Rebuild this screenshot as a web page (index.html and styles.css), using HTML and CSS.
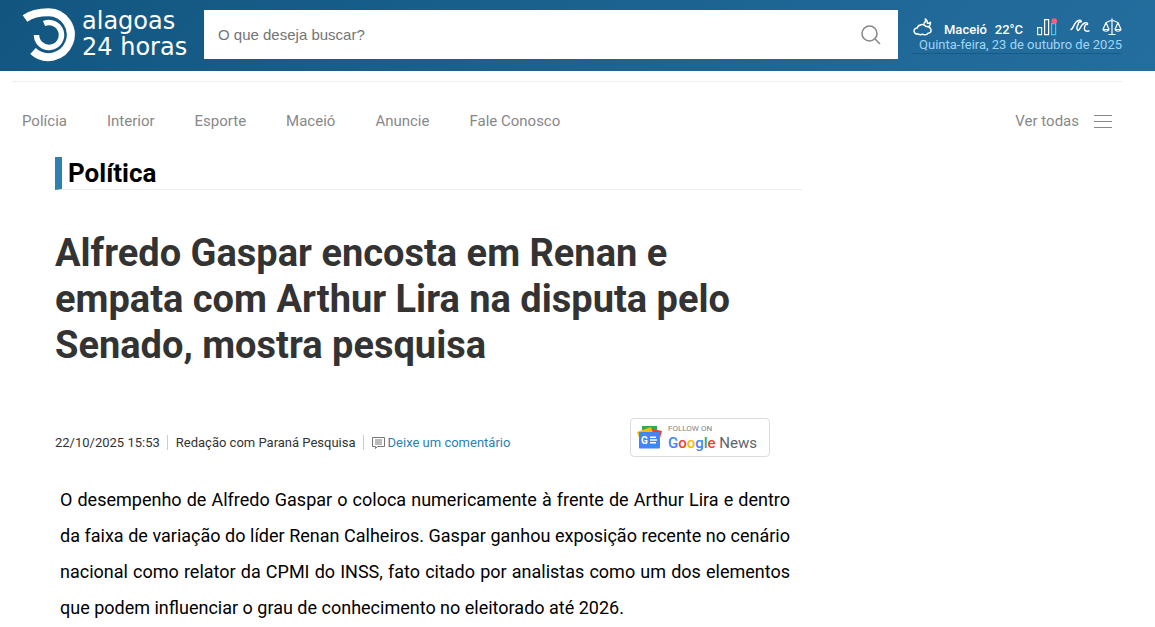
FILE: index.html
```html
<!DOCTYPE html>
<html lang="pt-BR">
<head>
<meta charset="utf-8">
<meta name="viewport" content="width=device-width, initial-scale=1">
<title>Alfredo Gaspar encosta em Renan - Alagoas 24 Horas</title>
<link rel="stylesheet" href="styles.css">
</head>
<body>
<header class="topbar">
  <a class="brand" href="#">
    <svg class="brand-mark" viewBox="0 0 54 54" aria-hidden="true">
      <g fill="none" stroke="#fff">
        <path d="M3 10.500C10 5.500 18 4.300 26.700 4.300A22.400 22.400 0 1 1 11 43" stroke-width="8"/>
        <path d="M22 15.500A12.500 12.500 0 1 1 14.500 27" stroke-width="5.500"/>
      </g>
    </svg>
    <span class="brand-name"><span>alagoas</span><span>24 horas</span></span>
  </a>
  <form class="search">
    <input class="search-input" type="text" placeholder="O que deseja buscar?" aria-label="O que deseja buscar?">
    <button class="search-button" type="button" aria-label="Buscar">
      <svg viewBox="0 0 20 20" width="20" height="20" fill="none" stroke="#888" stroke-width="1.600"><circle cx="8.500" cy="8.500" r="7.500"/><path d="M13.800 13.800 19 19"/></svg>
    </button>
  </form>
  <div class="info">
    <div class="weather">
      <svg class="cloud" viewBox="0 0 20 18" width="20" height="18" fill="none" stroke="#fff" stroke-width="1.500" stroke-linejoin="round"><path d="M5 16C0 16-.2 10.200 4.200 10 5 6.300 10.800 5.300 13 8.600c5.500-.8 7 6.600 2 6.600-1.500 2-4 2-5.500 1-1.500.8-3 .6-4.500-.2Z"/><path d="M10.500 5.500C12.500 4.500 13 3 12.300 1c1.800 1 2.200 2.800 2.200 4.200 1.200.3 2.200 0 3-.8 0 2-.5 3.200-1.500 4"/></svg>
      <span class="city">Maceió</span>
      <span class="temp">22°C</span>
      <a href="#" class="chart-link" aria-label="Indicadores"><svg viewBox="0 0 20 18" width="20" height="18" fill="none" stroke-width="1.200"><path d="M.6 9.600h4v7h-4z" stroke="#f0eecb"/><path d="M7.600 1.600h4v15h-4z" stroke="#fff"/><path d="M14.600 5.600h4v11h-4z" stroke="#3ccbf4"/><circle cx="17.300" cy="3" r="2.800" fill="#ff5c7c"/></svg></a>
      <a href="#" class="tide-link" aria-label="Tábua de marés"><svg viewBox="0 0 20 14" width="20" height="14" fill="none" stroke="#fff" stroke-width="1.400" stroke-linecap="round" stroke-linejoin="round"><path d="M1 10.500C4.500 9 3.500 2 9.500 1.200c1.500-.2 2 .8 1.600 1.800C9 2.300 8 4 8.300 5.200c-1.500 2.200-2 4.600-.3 6.300C11 10.500 10.500 4.500 15.500 3.700c1.500-.2 2.500.5 2 1.800-2-.4-3 .8-2.600 2-1 1.800-.6 4 1.300 4.700 1 .3 2 0 2.800-.4"/></svg></a>
      <a href="#" class="scale-link" aria-label="Justiça"><svg viewBox="0 0 20 18" width="20" height="18" fill="none" stroke="#fff" stroke-width="1.200" stroke-linejoin="round"><path d="M10 .5v16M6.500 16.500h7M3.500 4.500C6 4.500 7 2.500 10 2.500s4 2 6.500 2M4 4.500l-3 7h6zM16 4.500l-3 7h6zM1 11.500c.8 2.300 5.200 2.300 6 0M13 11.500c.8 2.300 5.200 2.300 6 0"/></svg></a>
    </div>
    <time class="today" datetime="2025-10-23">Quinta-feira, 23 de outubro de 2025</time>
  </div>
</header>
<nav class="menu" aria-label="Principal">
  <a href="#">Polícia</a>
  <a href="#">Interior</a>
  <a href="#">Esporte</a>
  <a href="#">Maceió</a>
  <a href="#">Anuncie</a>
  <a href="#">Fale Conosco</a>
  <button class="all-button" type="button">Ver todas <svg viewBox="0 0 18 13" width="18" height="13" stroke="#888" stroke-width="1"><path d="M0 .5h18M0 6.500h18M0 12.500h18"/></svg></button>
</nav>
<main class="article">
  <h2 class="section">Política</h2>
  <h1 class="headline">Alfredo Gaspar encosta em Renan e empata com Arthur Lira na disputa pelo Senado, mostra pesquisa</h1>
  <div class="meta">
    <div class="meta-info">
      <time class="meta-item" datetime="2025-10-22T15:53">22/10/2025 15:53</time>
      <span class="meta-item">Redação com Paraná Pesquisa</span>
      <a class="comment" href="#"><svg viewBox="0 0 13 12" width="13" height="12" fill="none" stroke="#777"><path d="M.5.500h12v9h-7l-2 2v-2h-3zM3 3h7M3 5h7M3 7h7"/></svg>Deixe um comentário</a>
    </div>
    <a class="news" href="#" aria-label="Follow on Google News">
      <svg viewBox="0 0 25 23" width="25" height="23" aria-hidden="true"><path fill="#34a853" d="M5 0h15v8H5z"/><path fill="#ea4335" d="m12 2 13 3-4 14z"/><path fill="#fbbc04" d="m0 6 14-5 4 12-14 4z"/><path fill="#4285f4" d="M2 6h21v15.500a1 1 0 0 1-1 1H3a1 1 0 0 1-1-1z"/><text class="news-ge" x="4" y="17.500">G</text><path stroke="#fff" stroke-width="1.500" d="M13 11.200h6M13 14h7M13 16.800h6"/></svg>
      <span class="news-text"><span class="news-follow">FOLLOW ON</span><span class="news-name"><b class="blue">G</b><b class="red">o</b><b class="yellow">o</b><b class="blue">g</b><b class="green">l</b><b class="red">e</b> News</span></span>
    </a>
  </div>
  <p class="body-text">O desempenho de Alfredo Gaspar o coloca numericamente à frente de Arthur Lira e dentro da faixa de variação do líder Renan Calheiros. Gaspar ganhou exposição recente no cenário nacional como relator da CPMI do INSS, fato citado por analistas como um dos elementos que podem influenciar o grau de conhecimento no eleitorado até 2026.</p>
</main>
</body>
</html>
```
FILE: styles.css
```css
* { box-sizing: border-box; }
body { margin: 0; background: #fff; color: #000; font-family: Roboto, sans-serif; }
a { color: inherit; text-decoration: none; }
button { border: 0; padding: 0; background: none; font: inherit; color: inherit; cursor: pointer; }
svg { display: block; flex: none; }

.topbar { display: flex; align-items: flex-start; padding: 8px 33px 9px 22px; background: linear-gradient(135deg, #125680, #246e9f); }
.brand { display: flex; width: 182px; flex: none; color: #fff; }
.brand-mark { width: 54px; height: 54px; }
.brand-name { display: flex; flex-direction: column; padding-left: 6px; font: 24px/26px "DejaVu Sans", sans-serif; white-space: nowrap; }
.search { display: flex; flex: 1; min-width: 0; height: 49px; margin-top: 2px; background: #fff; }
.search-input { flex: 1; min-width: 0; border: 0; padding: 0 14px; background: none; font: 15px "Liberation Sans", Arial, sans-serif; outline: 0; }
.search-input::placeholder { color: #757575; }
.search-button { width: 54px; display: grid; place-items: center; }
.info { width: 209px; flex: none; margin: 10px 0 0 15px; border-bottom: 1px solid #155b87; }
.weather { display: flex; align-items: flex-end; height: 18px; color: #fff; font-size: 13px; line-height: 12px; font-weight: 500; white-space: nowrap; }
.city { margin-left: 11px; }
.temp { margin-left: 8px; }
.chart-link { margin-left: 14px; }
.tide-link { margin: 0 0 3px 13px; }
.scale-link { margin-left: auto; }
.today { display: block; color: #9fd6f8; font-size: 13px; line-height: 17px; text-align: right; white-space: nowrap; }

.menu { display: flex; align-items: center; gap: 40px; margin: 10px 33px 0 12px; padding: 30px 10px 0; border-top: 1px solid #eee; color: #888; font-size: 15px; line-height: 18px; }
.all-button { display: flex; align-items: center; gap: 15px; margin-left: auto; }

.article { max-width: 747px; margin: 27px 0 0 55px; }
.section { margin: 0; padding-left: 6px; border-left: 7px solid #2e80b1; border-bottom: 1px solid #eee; font-size: 26px; line-height: 32px; }
.headline { max-width: 700px; margin: 40px 0 0; color: #333; font-size: 38px; line-height: 46px; }
.meta { display: flex; align-items: center; margin: 50px 32px 0 0; color: #333; font-size: 13px; line-height: 15px; }
.meta-info { display: flex; padding-top: 10px; }
.meta-item { padding-right: 7px; margin-right: 8px; border-right: 1px solid #ccc; }
.comment { display: flex; align-items: center; gap: 3px; color: #2e80b1; }
.news { display: flex; align-items: center; gap: 6px; width: 140px; height: 39px; margin-left: auto; padding-left: 6px; border: 1px solid #dadce0; border-radius: 4px; }
.news-ge { fill: #fff; font: 700 10px Roboto, sans-serif; }
.news-text { display: flex; flex-direction: column; color: #5f6368; white-space: nowrap; }
.news-follow { color: #80868b; font-size: 8px; line-height: 10px; }
.news-name { font-size: 15px; line-height: 18px; }
.news-name b { font-weight: 500; }
.blue { color: #4285f4; }
.red { color: #ea4335; }
.yellow { color: #fbbc04; }
.green { color: #34a853; }
.body-text { margin: 25px 12px 0 5px; font-size: 18px; line-height: 36px; text-align: justify; }
```
